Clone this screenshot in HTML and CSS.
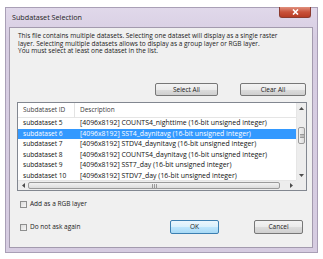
FILE: index.html
```html
<!DOCTYPE html>
<html>
<head>
<meta charset="utf-8">
<link rel="stylesheet" href="styles.css">
</head>
<body>
<div class="page">
  <div class="window">
    <div class="titlebar">
      <span class="title">Subdataset Selection</span>
      <div class="close"><svg width="9" height="6" viewBox="0 0 9 6"><path d="M2 0.5 L7 5.5 M7 0.5 L2 5.5" stroke="#fff" stroke-width="1.6"/></svg></div>
    </div>
    <div class="client">
      <p class="intro">This file contains multiple datasets. Selecting one dataset will display as a single raster<br>layer. Selecting multiple datasets allows to display as a group layer or RGB layer.<br>You must select at least one dataset in the list.</p>
      <div class="toolbar">
        <div class="btn btn-select">Select All</div>
        <div class="btn btn-clear">Clear All</div>
      </div>
      <div class="list">
        <div class="content">
          <div class="header">
            <span class="col1">Subdataset ID</span>
            <span class="col2">Description</span>
          </div>
          <div class="row"><span class="col1">subdataset 5</span><span class="col2">[4096x8192] COUNTS4_nighttime (16-bit unsigned integer)</span></div>
          <div class="row selected"><span class="col1">subdataset 6</span><span class="col2">[4096x8192] SST4_daynitavg (16-bit unsigned integer)</span></div>
          <div class="row"><span class="col1">subdataset 7</span><span class="col2">[4096x8192] STDV4_daynitavg (16-bit unsigned integer)</span></div>
          <div class="row"><span class="col1">subdataset 8</span><span class="col2">[4096x8192] COUNTS4_daynitavg (16-bit unsigned integer)</span></div>
          <div class="row"><span class="col1">subdataset 9</span><span class="col2">[4096x8192] SST7_day (16-bit unsigned integer)</span></div>
          <div class="row"><span class="col1">subdataset 10</span><span class="col2">[4096x8192] STDV7_day (16-bit unsigned integer)</span></div>
        </div>
        <div class="vscroll">
          <div class="arrow"><svg width="5" height="3" viewBox="0 0 5 3"><path d="M0 3 L2.5 0 L5 3Z" fill="#4d4d4d"/></svg></div>
          <div class="vtrack"><div class="vthumb"><svg width="4" height="4" viewBox="0 0 4 4"><path d="M0 0.5H4M0 2H4M0 3.5H4" stroke="#7a7a7a" stroke-width="0.7"/></svg></div></div>
          <div class="arrow"><svg width="5" height="3" viewBox="0 0 5 3"><path d="M0 0 L2.5 3 L5 0Z" fill="#4d4d4d"/></svg></div>
        </div>
        <div class="hscroll">
          <div class="arrow"><svg width="3" height="5" viewBox="0 0 3 5"><path d="M3 0 L0 2.5 L3 5Z" fill="#4d4d4d"/></svg></div>
          <div class="htrack"><div class="hthumb"><svg width="5" height="4" viewBox="0 0 5 4"><path d="M0.5 0V4M2.5 0V4M4.5 0V4" stroke="#7a7a7a" stroke-width="0.7"/></svg></div></div>
          <div class="arrow"><svg width="3" height="5" viewBox="0 0 3 5"><path d="M0 0 L3 2.5 L0 5Z" fill="#4d4d4d"/></svg></div>
        </div>
        <div class="corner"></div>
      </div>
      <label class="check check-rgb"><span class="box"></span>Add as a RGB layer</label>
      <div class="footer">
        <label class="check"><span class="box"></span>Do not ask again</label>
        <div class="actions">
          <div class="btn btn-ok">OK</div>
          <div class="btn btn-cancel">Cancel</div>
        </div>
      </div>
    </div>
  </div>
</div>
</body>
</html>
```

FILE: styles.css
```css
html, body {
  margin: 0;
  padding: 0;
  background: #ffffff;
}
body {
  font-family: "Open Sans", "Noto Sans", sans-serif;
  color: #1a1a1a;
}
.page {
  padding: 7px 5px 6px 5px;
  width: 313px;
}
.window {
  width: 313px;
  height: 246px;
  box-sizing: border-box;
  border: 1px solid #a99fb6;
  background: linear-gradient(#e0d8ea, #d7cde2 30px, #d6cce1);
  display: flex;
  flex-direction: column;
}
.titlebar {
  height: 19px;
  display: flex;
  justify-content: space-between;
  align-items: flex-start;
  padding-left: 6px;
  padding-right: 6px;
}
.title {
  font-size: 7.2px;
  line-height: 8px;
  margin-top: 4.5px;
  color: #1e1e1e;
}
.close {
  width: 32px;
  height: 11px;
  margin-top: -1px;
  box-sizing: border-box;
  border: 1px solid #8c3b2f;
  border-top: none;
  border-radius: 0 0 3px 3px;
  background: linear-gradient(#e0907e, #c9523a 50%, #b73c25);
  display: flex;
  align-items: center;
  justify-content: center;
}
.close svg { display: block; }
.client {
  margin: 0 4px 0 3px;
  height: 221px;
  box-sizing: border-box;
  border: 1px solid #a39aae;
  background: #f0f0f0;
  display: flex;
  flex-direction: column;
}
.intro {
  margin: 0;
  padding: 4px 0 0 8px;
  font-size: 6.5px;
  line-height: 7.5px;
  white-space: nowrap;
  color: #1a1a1a;
}
.toolbar {
  display: flex;
  justify-content: flex-end;
  gap: 22px;
  margin-top: 28.5px;
  padding-right: 6px;
}
.btn {
  height: 13px;
  box-sizing: border-box;
  border: 1px solid #777;
  border-radius: 2px;
  background: linear-gradient(#f3f3f3, #ebebeb 50%, #dddddd 51%, #cfcfcf);
  font-size: 6.5px;
  line-height: 11px;
  text-align: center;
  color: #1a1a1a;
}
.btn-select { width: 63px; }
.btn-clear { width: 66px; }
.list {
  margin: 6px 5px 0 7px;
  height: 89px;
  box-sizing: border-box;
  border: 1px solid #828790;
  background: #ffffff;
  display: grid;
  grid-template-columns: 1fr 10px;
  grid-template-rows: 1fr 10px;
}
.content {
  overflow: hidden;
  font-size: 6.9px;
  white-space: nowrap;
}
.header {
  height: 15px;
  display: flex;
  align-items: center;
  border-bottom: 1px solid #e5e5e5;
  box-sizing: border-box;
  color: #3c3c3c;
  font-size: 6.5px;
}
.col1 {
  width: 57px;
  box-sizing: border-box;
  padding-left: 5px;
  flex: none;
}
.header .col1 {
  border-right: 1px solid #e3e3e3;
  height: 15px;
  line-height: 14px;
}
.col2 {
  padding-left: 5px;
}
.header .col2 {
  flex: 1;
  line-height: 14px;
}
.row {
  height: 10.5px;
  line-height: 10.5px;
  display: flex;
  color: #111;
}
.row .col1 { font-size: 6.6px; }
.row.selected {
  background: #3399ff;
  color: #ffffff;
}
.vscroll {
  background: #ededed;
  border-left: 1px solid #e6e6e6;
  display: flex;
  flex-direction: column;
}
.vscroll .arrow {
  height: 10px;
  display: flex;
  align-items: center;
  justify-content: center;
}
.vtrack {
  flex: 1;
  padding-top: 14px;
}
.vthumb {
  height: 17px;
  margin: 0 1px;
  box-sizing: border-box;
  border: 1px solid #9a9a9a;
  border-radius: 2px;
  background: linear-gradient(90deg, #f2f2f2, #dcdcdc);
  display: flex;
  align-items: center;
  justify-content: center;
}
.hscroll {
  background: #ededed;
  border-top: 1px solid #e6e6e6;
  display: flex;
}
.hscroll .arrow {
  width: 10px;
  display: flex;
  align-items: center;
  justify-content: center;
}
.htrack {
  flex: 1;
  display: flex;
  padding-right: 6px;
}
.hthumb {
  flex: 1;
  margin: 1px 0;
  box-sizing: border-box;
  border: 1px solid #9a9a9a;
  border-radius: 2px;
  background: linear-gradient(#f2f2f2, #dcdcdc);
  display: flex;
  align-items: center;
  justify-content: center;
}
.corner {
  background: #ededed;
}
svg { display: block; }
.check {
  display: flex;
  align-items: center;
  gap: 3px;
  font-size: 6.5px;
  line-height: 8px;
  color: #1a1a1a;
}
.box {
  width: 7px;
  height: 7px;
  box-sizing: border-box;
  border: 1px solid #8e8f8f;
  background: linear-gradient(135deg, #dcdcdc, #f6f6f6);
}
.check-rgb {
  margin: 9px 0 0 10px;
}
.footer {
  display: flex;
  justify-content: space-between;
  align-items: center;
  margin-top: 12px;
  padding-left: 10px;
  padding-right: 9px;
}
.actions {
  display: flex;
  gap: 35px;
}
.btn-ok {
  width: 49px;
  height: 14px;
  line-height: 12px;
  border-color: #3c7fb1;
  background: linear-gradient(#eaf6fd, #d9f0fc 50%, #bee6fd 51%, #a7d9f5);
}
.btn-cancel {
  width: 49px;
  height: 14px;
  line-height: 12px;
}
```
